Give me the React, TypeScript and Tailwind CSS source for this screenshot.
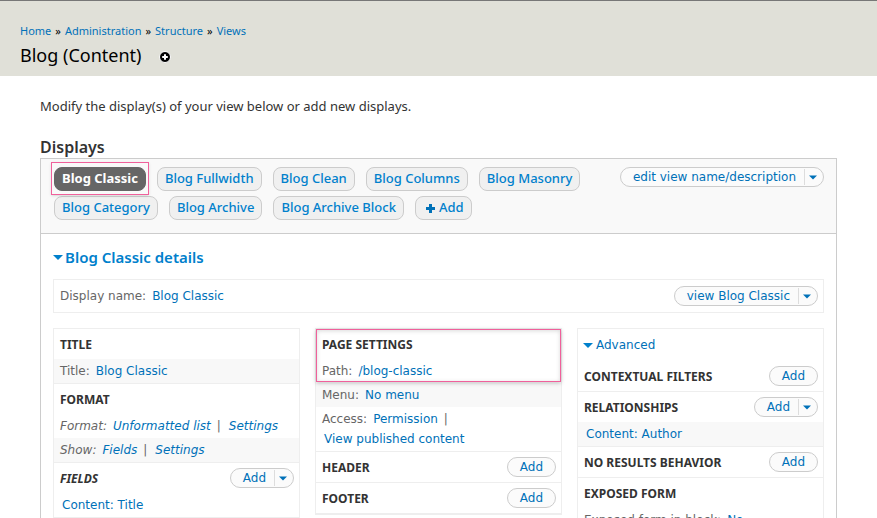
import type { ReactNode } from 'react';

const displays = ['Blog Fullwidth', 'Blog Clean', 'Blog Columns', 'Blog Masonry'];
const moreDisplays = ['Blog Category', 'Blog Archive', 'Blog Archive Block'];

function Link({ children }: { children: ReactNode }) {
  return <a href="#" className="text-[#0071b8] hover:underline">{children}</a>;
}

function Label({ children }: { children: ReactNode }) {
  return <span className="mr-1.5">{children}</span>;
}

function Divider() {
  return <span className="mr-2 ml-1.5">|</span>;
}

function Arrow({ className = '' }: { className?: string }) {
  return (
    <svg viewBox="0 0 10 5" className={`h-[5px] shrink-0 ${className}`} aria-hidden="true">
      <path d="M0 0H10L5 5Z" fill="currentColor" />
    </svg>
  );
}

function Tab({ children, active = false }: { children: ReactNode; active?: boolean }) {
  return (
    <button
      type="button"
      className={`flex h-6 items-center rounded-lg border px-[7px] text-[13px] ${
        active ? 'border-[#666] bg-[#666] font-bold text-white' : 'border-[#ccc] bg-[#f0f0f0] font-medium text-[#0080cc]'
      }`}
    >
      {children}
    </button>
  );
}

function Pill({ label, menu = false }: { label: string; menu?: boolean }) {
  return (
    <div className="flex h-5 shrink-0 items-stretch rounded-full border border-[#ccc] bg-[#fbfbfb] font-['DejaVu_Sans',sans-serif] text-xs leading-[18px] text-[#0071b8]">
      <button type="button" className={menu ? 'pl-3 pr-2' : 'px-3'}>{label}</button>
      {menu && (
        <button type="button" aria-label={`${label}: more actions`} className="my-px flex items-center border-l border-[#ddd] pl-1 pr-[6px]">
          <Arrow className="w-2" />
        </button>
      )}
    </div>
  );
}

function Bucket({ title, action, italic = false, children }: { title: string; action?: ReactNode; italic?: boolean; children?: ReactNode }) {
  return (
    <section className="border-b border-[#eee]">
      <div className="flex h-[30px] items-center justify-between pr-[5px] pl-1.5">
        <h3 className={`pt-0.5 text-xs font-bold text-[#333] ${italic ? 'italic' : ''}`}>{title}</h3>
        {action}
      </div>
      {children}
    </section>
  );
}

function Row({ striped = false, italic = false, children }: { striped?: boolean; italic?: boolean; children: ReactNode }) {
  return (
    <div className={`px-1.5 py-0.5 font-['DejaVu_Sans',sans-serif] text-xs leading-5 text-[#666] ${striped ? 'bg-[#f8f8f8]' : ''} ${italic ? 'italic' : ''}`}>
      {children}
    </div>
  );
}

export default function App() {
  return (
    <div className="h-screen overflow-hidden bg-white font-['Noto_Sans','Open_Sans',sans-serif] text-[#333]">
      <header className="h-[76px] border-t border-[#777] bg-[#e0e0d8] px-5 pt-[22px] text-black">
        <nav aria-label="Breadcrumb" className="flex gap-1 text-[11px] leading-4">
          <Link>Home</Link>»<Link>Administration</Link>»<Link>Structure</Link>»<Link>Views</Link>
        </nav>
        <div className="mt-1 flex items-center gap-[18px]">
          <h1 className="text-lg leading-6">Blog (Content)</h1>
          <button type="button" aria-label="Add to shortcuts" className="pt-1">
            <svg viewBox="0 0 12 12" className="size-3">
              <circle cx="6" cy="6" r="5.5" fill="#000" stroke="#fff" />
              <path d="M6 3.2V8.8M3.2 6H8.8" stroke="#fff" strokeWidth="2" />
            </svg>
          </button>
        </div>
      </header>

      <main className="px-10 pt-5">
        <p className="text-[13px] leading-5">Modify the display(s) of your view below or add new displays.</p>
        <h2 className="mt-5 text-base leading-[22px] font-semibold">Displays</h2>

        <div className="border border-[#ccc]">
          <div className="flex h-[75px] items-start justify-between border-b border-[#ccc] bg-[#f9f9f9] pt-2 pr-3 pl-[13px]">
            <div className="flex flex-col gap-[5px]">
              <div className="flex gap-[11px]">
                <div className="relative">
                  <Tab active>Blog Classic</Tab>
                  <div className="pointer-events-none absolute -inset-x-[3px] -top-[5px] -bottom-1 border border-[#f0609b] shadow" />
                </div>
                {displays.map((name) => <Tab key={name}>{name}</Tab>)}
              </div>
              <div className="flex gap-[11px]">
                {moreDisplays.map((name) => <Tab key={name}>{name}</Tab>)}
                <Tab>
                  <svg viewBox="0 0 9 9" className="mr-1 ml-[3px] size-[9px]" aria-hidden="true">
                    <path d="M3 0h3v3h3v3H6v3H3V6H0V3h3Z" fill="#0071b8" />
                  </svg>
                  Add
                </Tab>
              </div>
            </div>
            <Pill label="edit view name/description" menu />
          </div>

          <div className="px-3 pt-3">
            <button type="button" className="flex items-center gap-0.5 text-[15px] leading-[22px] font-semibold text-[#0080cc]">
              <Arrow className="w-[10px]" />Blog Classic details
            </button>

            <div className="mt-[11px] flex h-[34px] items-center justify-between border border-[#eee] pr-[5px] pl-1.5 font-['DejaVu_Sans',sans-serif] text-xs text-[#666]">
              <span><Label>Display name:</Label><Link>Blog Classic</Link></span>
              <Pill label="view Blog Classic" menu />
            </div>

            <div className="mt-[15px] grid grid-cols-3 items-start gap-[15px]">
              <div className="border border-[#eee]">
                <Bucket title="TITLE">
                  <Row striped><Label>Title:</Label><Link>Blog Classic</Link></Row>
                </Bucket>
                <Bucket title="FORMAT">
                  <Row italic><Label>Format:</Label><Link>Unformatted list</Link><Divider /><Link>Settings</Link></Row>
                  <Row italic striped><Label>Show:</Label><Link>Fields</Link><Divider /><Link>Settings</Link></Row>
                </Bucket>
                <Bucket title="FIELDS" italic action={<Pill label="Add" menu />}>
                  <Row><span className="pl-0.5"><Link>Content: Title</Link></span></Row>
                </Bucket>
              </div>

              <div className="relative border border-[#eee]">
                <div className="pointer-events-none absolute inset-x-0 top-0 h-[53px] border border-[#f0609b] shadow-[0_1px_4px_rgba(0,0,0,0.25),inset_0_1px_4px_rgba(0,0,0,0.15)]" />
                <Bucket title="PAGE SETTINGS">
                  <Row><Label>Path:</Label><Link>/blog-classic</Link></Row>
                  <Row striped><Label>Menu:</Label><Link>No menu</Link></Row>
                  <Row><Label>Access:</Label><Link>Permission</Link><Divider /><br /><span className="pl-0.5"><Link>View published content</Link></span></Row>
                </Bucket>
                <Bucket title="HEADER" action={<Pill label="Add" />} />
                <Bucket title="FOOTER" action={<Pill label="Add" />} />
              </div>

              <div className="border border-[#eee]">
                <button type="button" className="flex h-8 items-center gap-[3px] pl-[5px] font-['DejaVu_Sans',sans-serif] text-xs text-[#0071b8]">
                  <Arrow className="w-[10px] text-[#0080cc]" />Advanced
                </button>
                <Bucket title="CONTEXTUAL FILTERS" action={<Pill label="Add" />} />
                <Bucket title="RELATIONSHIPS" action={<Pill label="Add" menu />}>
                  <Row striped><span className="pl-0.5"><Link>Content: Author</Link></span></Row>
                </Bucket>
                <Bucket title="NO RESULTS BEHAVIOR" action={<Pill label="Add" />} />
                <Bucket title="EXPOSED FORM">
                  <Row><Label>Exposed form in block:</Label><Link>No</Link></Row>
                </Bucket>
              </div>
            </div>
          </div>
        </div>
      </main>
    </div>
  );
}
